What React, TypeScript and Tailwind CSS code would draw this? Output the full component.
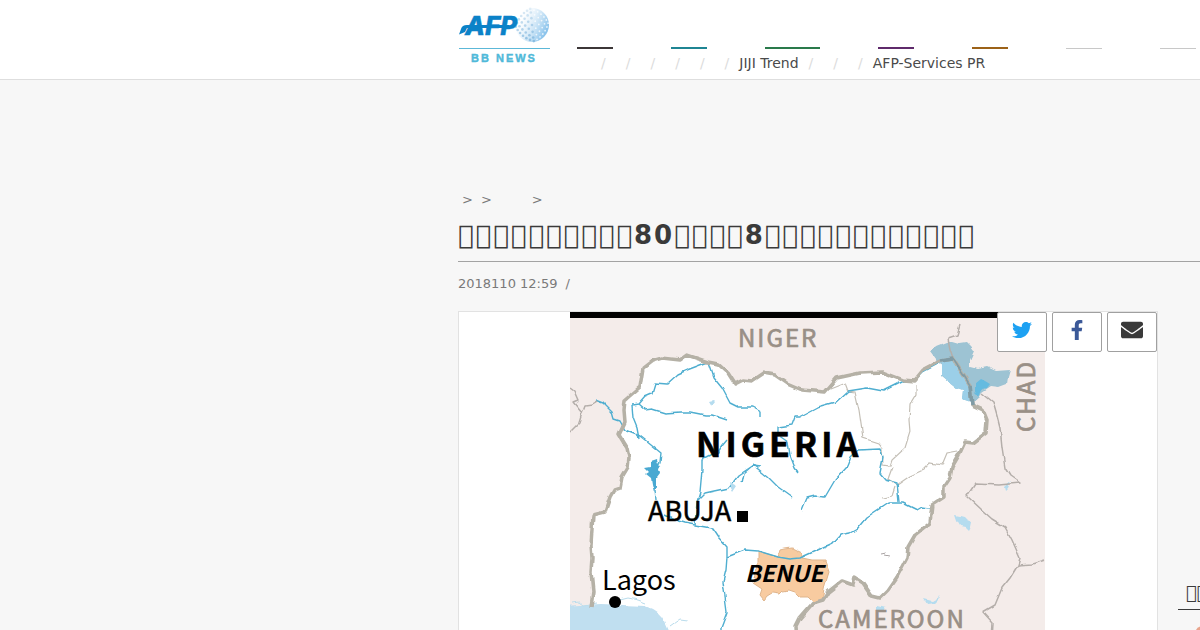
import { FaEnvelope, FaFacebookF, FaTwitter } from 'react-icons/fa'

interface Category {
  name: string
  line: string
}

const categories: Category[] = [
  { name: 'News', line: 'w-9 border-t-2 border-[#3c3637]' },
  { name: 'Life', line: 'w-9 border-t-2 border-[#1f8593]' },
  { name: 'Environment', line: 'w-[55px] border-t-2 border-[#2a7a4b]' },
  { name: 'Culture', line: 'w-9 border-t-2 border-[#5f2a6b]' },
  { name: 'Sports', line: 'w-9 border-t-2 border-[#9c6218]' },
  { name: 'Photo', line: 'w-9 border-b border-[#c8c8c8]' },
  { name: 'Video', line: 'w-9 border-b border-[#c8c8c8]' },
]

const subLinks = ['', '', '', '', '', '', 'JIJI Trend', '', '', 'AFP-Services PR']

// Private use code points, drawn as the font's empty box
const box = (count: number) => '\uE0A5'.repeat(count)

const rivers = [
  '595,400 603,403 612,412 614,419 620,421 625,430 640,436 650,444 661,453 660,462 655,470',
  '632,405 633,418 637,428 639,439',
  '632,405 638,404 645,396 652,393 655,383 667,384 678,374 687,370 708,362 713,377 722,388 730,403 738,407 752,407 761,412 761,417',
  '638,404 645,410 652,409 665,413 680,412 690,412 705,415 712,415 727,420',
  '940,363 923,372 914,381 903,381 893,386 883,391 867,388 848,391 835,403 817,408 800,417 795,417 792,425 778,427 778,435 788,442 790,455 795,468 798,472',
  '727,440 722,446 718,452 702,460 702,470 700,492 697,502 695,525',
  '698,500 705,493 714,491 728,488 738,475 753,465 768,477 778,487 792,497',
  '665,515 675,520 685,523 695,525 712,528 718,537 727,547 727,557 726,570 723,582 727,612 721,628 721,660',
  '727,557 745,550 758,551 778,557 790,559 800,558 833,543 840,535 850,533 857,529 867,517 888,503 903,503 917,510 922,507 930,508',
  '802,510 807,498 815,496 825,497 835,480 847,467 851,457 858,450 880,449 883,458 880,473 886,480 897,483 899,502',
  '742,483 744,473 752,466 760,467',
  '655,490 656,500',
]

const provinces = [
  '825,391 845,383 848,391 855,392 859,410 863,438 878,443 882,448 883,465 890,466 892,460 905,448 910,432 909,420 910,405 916,395 916,385',
  '892,468 888,479 897,485 910,476 923,470 930,463 942,465 947,453 958,451',
  '882,498 892,496 895,487',
]

const neighbours = [
  '960,325 957,335 948,338 950,350 953,359 970,385 972,405',
  '982,393 993,402 997,416 1000,428 1002,448 1005,468 1010,476 1020,483 1000,485 975,484 967,496 982,510 992,519 1005,527 1012,540 1020,558 1018,565 1010,578 1002,588 995,605 983,612 992,622 991,640',
  '1018,565 1032,564 1045,560',
  '570,388 574,391 578,400 573,402 582,413 579,423 570,432',
  '582,413 585,405 592,404 597,401',
]

const nigeriaBorder =
  '591,607 593,592 591,572 592,558 591,545 593,515 605,512 610,497 614,490 620,488 622,477 628,467 629,458 627,448 619,435 625,422 624,410 625,400 640,387 643,368 652,361 662,358 680,360 687,355 708,362 718,364 728,373 735,384 743,380 752,381 764,373 775,375 788,384 802,390 825,392 837,378 860,373 882,372 903,380 914,381 923,370 940,361 953,359 970,385 972,405 983,410 987,420 986,433 973,443 965,442 959,455 952,467 950,478 944,487 944,497 932,505 930,523 915,535 908,547 907,558 897,577 888,590 880,598 872,596 863,583 855,578 853,585 842,581 828,592 823,600 813,603 800,618 796,626 798,660'

const labelFont = 'font-["Noto_Sans_CJK_JP","Noto_Sans",sans-serif]'

function GlobeDots() {
  const dots = []
  for (let row = -7; row <= 7; row++) {
    for (let col = -7; col <= 7; col++) {
      if ((row + col) % 2 !== 0) continue
      const x = 73 + 17 * Math.sin((col / 7) * 1.45) + row * 0.3
      const y = 20 + 17 * Math.sin((row / 7) * 1.45) - col * 0.3
      if (Math.hypot(x - 73, y - 20) > 16.5) continue
      const white = col > 0
      dots.push(
        <circle
          key={`${row}-${col}`}
          cx={x}
          cy={y}
          r={white ? 0.9 : 1.3}
          fill={white ? '#ffffff' : '#7db4dc'}
          opacity={white ? 0.75 : 0.5 + row * 0.05}
        />
      )
    }
  }
  return <g>{dots}</g>
}

function Logo() {
  return (
    <a href="#top" aria-label="AFP BB News" className="block">
      <svg viewBox="0 0 92 60" className="block h-[60px] w-[92px]">
        <defs>
          <linearGradient id="globe" x1="0" y1="0" x2="1" y2="0.5">
            <stop offset="0.25" stopColor="#d4e8f6" stopOpacity="0" />
            <stop offset="1" stopColor="#8cc4ec" />
          </linearGradient>
        </defs>
        <circle cx="73" cy="20" r="17" fill="url(#globe)" />
        <GlobeDots />
        <text
          x="6"
          y="30"
          stroke="#0b82c8"
          strokeWidth="0.4"
          className="fill-[#0b82c8] font-[Inter,sans-serif] text-[26px] font-extrabold italic"
        >
          AFP
        </text>
        <path d="M2 24 Q3 20 8 20 H50 V23 H8 L6 27 L0 29.500 Z" fill="#0b82c8" />
        <path d="M0 43.500H91" stroke="#5cb8d8" />
        <text
          x="12"
          y="57"
          stroke="#4fb9d9"
          strokeWidth="0.4"
          className='fill-[#4fb9d9] font-["Liberation_Sans",sans-serif] text-[11px] font-bold tracking-[2px]'
        >
          BB NEWS
        </text>
      </svg>
    </a>
  )
}

function Header() {
  return (
    <header id="top" className="flex h-20 border-b border-[#dedede] bg-white pl-[459px]">
      <div className="shrink-0 pt-[5px]">
        <Logo />
      </div>
      <div className="ml-[26px] shrink-0 pt-[47px]">
        <nav aria-label="Categories" className="flex gap-[58px]">
          {categories.map((category) => (
            <a key={category.name} href="#top" aria-label={category.name} className={`block h-0.5 ${category.line}`} />
          ))}
        </nav>
        <ul className="ml-[14px] flex pt-1 text-sm">
          {subLinks.map((label, i) => (
            <li key={i} className="flex">
              {i > 0 && <span className="px-[10px] text-[#dcdcdc]">/</span>}
              {label && (
                <a href="#top" className="whitespace-nowrap text-[#4a4a4a]">
                  {label}
                </a>
              )}
            </li>
          ))}
        </ul>
      </div>
    </header>
  )
}

function NigeriaMap() {
  return (
    <svg viewBox="570 312 475 475" role="img" aria-label="Map of Nigeria" className="ml-[111px] block h-[475px] w-[475px]">
      <defs>
        {/* roughens coast and border lines */}
        <filter id="rough" filterUnits="userSpaceOnUse" x="570" y="312" width="475" height="475">
          <feTurbulence type="fractalNoise" baseFrequency="0.1" numOctaves="1" seed="4" result="noise" />
          <feDisplacementMap in="SourceGraphic" in2="noise" scale="5" xChannelSelector="R" yChannelSelector="G" />
        </filter>
      </defs>
      <rect x="570" y="312" width="475" height="475" fill="#f4ecea" />
      <g filter="url(#rough)">
        <polygon points={`${nigeriaBorder} 780,700 670,800 560,800 560,607`} fill="#ffffff" />
        <path d="M560 606 L600 604 L645 606 Q660 611 665 622 L670 633 L680 650 L700 800 H560Z" fill="#c0dff0" />
        <path d="M572 603l8-1 4 3 12-2 M620 600l8-2 10 2 8 3 M670 626l10-7 8 1" fill="none" stroke="#b9dcec" />

        {/* Benue state */}
        <path
          d="M758 551L778 557 780 550 784 549 792 548 802 553 802 558 812 560 825 560 829 572 825 585 822 600 813 602 808 597 800 597 795 592 789 590 782 591 779 594 772 593 767 596 764 600 760 595 762 589 753 583 758 565Z"
          fill="#f8cba0"
          stroke="#dfb58d"
        />

        <g fill="none" stroke="#c4bfb6" strokeWidth="1.2">
          {provinces.map((points) => (
            <polyline key={points} points={points} />
          ))}
        </g>
        <g fill="none" stroke="#4faed0" strokeWidth="1.4" strokeLinejoin="round">
          {rivers.map((points) => (
            <polyline key={points} points={points} />
          ))}
        </g>

        {/* lakes */}
        <path d="M645 468l6-1 0-5 6-2 1 4 3 1-3 4 1 5-3 4 0 8-2 6-2-8-1-6-5-4 3-2Z" fill="#4aa9d2" />
        <path d="M955 515l5 1 4 1 3 3 5 2-1 5-2 4-4-4-5-1-3-5Z M924 599l8 2 9-5-7 7-7 1Z M1004 487l7-6-3 7-3 3Z" fill="#b5dcef" />
        <path d="M709 402l4-1 2 2-3 4Z M729 482l8 4-4 6-3-6Z M877 605l8 2-2 5-6-2Z" fill="#b5dcef" />
        <path
          d="M930 352L936 346 946 342 953 342 960 344 967 343 971 347 974 351 970 360 970 367 978 369 987 367 996 371 1010 370 1008 377 1007 384 999 387 991 386 982 392 978 399 971 402 962 399 963 390 957 388 947 380 942 376 943 366 938 363Z"
          fill="#9dc3d3"
        />
        <path d="M942 363l11-3 16 24 2 18-9-3 1-9-6-2-10-8-5-5Z" fill="#9bcfe8" />
        <path d="M975 384l6-5 4 2 5 3-3 4-5 1-3 7-4-4Z" fill="#65bbe0" />
        <g fill="none" stroke="#b4aeaa" strokeWidth="1.5" strokeLinejoin="round">
          {neighbours.map((points) => (
            <polyline key={points} points={points} />
          ))}
        </g>
        <polyline points={nigeriaBorder} fill="none" stroke="#b5b1a6" strokeWidth="3.5" strokeLinejoin="round" />
        <path d="M940 361L953 359" fill="none" stroke="#7f9ba5" strokeWidth="3.5" />
        <path d="M953 359L970 385" fill="none" stroke="#7f9ba5" strokeWidth="1.5" />
        <path d="M970 385L972 405" fill="none" stroke="#7f9ba5" strokeWidth="3.5" />
        <path d="M881 555l5-1 M885 556l5 1" stroke="#aaa4a4" />
      </g>

      <rect x="570" y="312" width="475" height="6" fill="#000000" />
      <rect x="737" y="511" width="11" height="11" fill="#000000" />
      <circle cx="615" cy="602" r="6" fill="#000000" />

      <g className={labelFont}>
        <g stroke="#998f86" strokeWidth="0.7" className="fill-[#998f86] text-2xl tracking-[2px]">
          <text x="738" y="347">NIGER</text>
          <text x="818" y="628">CAMEROON</text>
          <text transform="translate(1035 432) rotate(-90)">CHAD</text>
        </g>
        <text x="696" y="457" stroke="#000000" strokeWidth="0.6" className="text-[34px] font-bold tracking-[4px]">
          NIGERIA
        </text>
        <text x="648" y="521" stroke="#000000" strokeWidth="0.5" className="text-[27px]">
          ABUJA
        </text>
        <text x="602" y="590" className="text-[27px]">
          Lagos
        </text>
        <text x="745" y="582" className="text-[23px] font-bold italic">
          BENUE
        </text>
      </g>
    </svg>
  )
}

function ShareButtons() {
  const buttonClass = 'flex h-10 w-[50px] items-center justify-center rounded-xs border border-[#a0a0a0] bg-white'
  return (
    <div className="absolute top-0 right-0 flex gap-[5px]">
      <button type="button" aria-label="Twitter" className={buttonClass}>
        <FaTwitter className="mb-1 size-5 text-[#1da1f2]" />
      </button>
      <button type="button" aria-label="Facebook" className={buttonClass}>
        <FaFacebookF className="mb-1 size-5 text-[#3b5998]" />
      </button>
      <button type="button" aria-label="Mail" className={buttonClass}>
        <FaEnvelope className="mb-1 size-[22px] text-[#3a3a3a]" />
      </button>
    </div>
  )
}

export default function App() {
  return (
    <div className='min-h-screen overflow-hidden bg-[#f7f7f7] font-["DejaVu_Sans",sans-serif] text-[#3a3a3a]'>
      <Header />
      <main className="pt-[110px] pl-[458px]">
        <nav aria-label="Breadcrumb" className="flex pl-1 text-[13px] leading-5 text-[#7a7a7a]">
          <span>&gt;</span>
          <span className="ml-2">&gt;</span>
          <span className="ml-10">&gt;</span>
        </nav>
        <h1 className="border-b border-[#a3a3a3] pt-[5px] pb-1.5 text-[26px] leading-10 font-bold tracking-[2px] whitespace-nowrap">
          {box(10)}80{box(4)}8{box(12)}
        </h1>
        <div className="flex gap-2 pt-3 text-[13px] leading-5 text-[#7a7a7a]">
          <time dateTime="2018-01-10T12:59">2018110 12:59</time>
          <span>/</span>
        </div>
        <div className="flex gap-5 pt-[17px]">
          <article className="relative w-[700px] shrink-0 border border-[#e2e2e2] bg-white">
            <NigeriaMap />
            <ShareButtons />
          </article>
          <aside className="w-[300px] shrink-0 pt-[268px]">
            <h2 className="border-b border-[#3a3a3a] pb-0.5 pl-2 text-lg whitespace-nowrap">{box(8)}</h2>
            <svg viewBox="0 0 80 60" aria-hidden="true" className="mt-4 ml-4 h-[60px] w-20">
              <path d="M2 4 Q4 0 10 0 H80 V60 H8 Q2 30 2 4Z" fill="#e9a48c" />
            </svg>
          </aside>
        </div>
      </main>
    </div>
  )
}
